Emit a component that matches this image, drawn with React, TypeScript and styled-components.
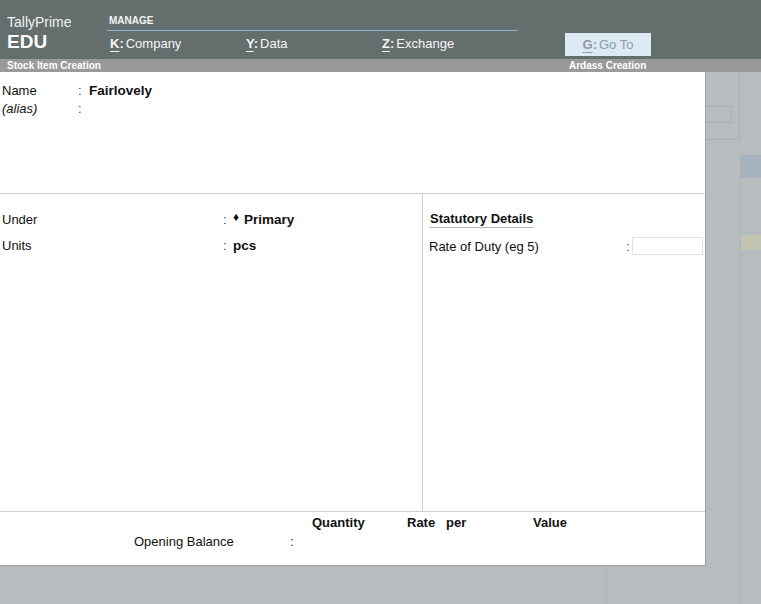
import React from "react";
import styled, { createGlobalStyle } from "styled-components";

const Global = createGlobalStyle`
  html, body { margin: 0; padding: 0; }
  body { font-family: "Liberation Sans", Arial, sans-serif; background: #b7bcbf; overflow: hidden; }
  * { box-sizing: border-box; }
`;

const Root = styled.div`
  width: 761px;
  height: 604px;
  display: flex;
  flex-direction: column;
  background: #b7bcbf;
  font-family: "Liberation Sans", Arial, sans-serif;
  color: #111;
`;

const Header = styled.header`
  height: 59px;
  background: #646e6d;
  display: flex;
  color: #fff;
`;

const Brand = styled.div`
  width: 107px;
  padding: 14px 0 0 7px;
  display: flex;
  flex-direction: column;
`;

const BrandName = styled.div`
  font-size: 14px;
  line-height: 16px;
  color: #f2f2f2;
`;

const BrandEdition = styled.div`
  font-size: 19px;
  line-height: 22px;
  font-weight: bold;
  margin-top: 1px;
`;

const Menu = styled.nav`
  width: 411px;
  padding-top: 15px;
  display: flex;
  flex-direction: column;
`;

const MenuLabel = styled.div`
  font-size: 10px;
  line-height: 12px;
  font-weight: bold;
  padding-left: 2px;
  color: #f4f4f4;
`;

const MenuRule = styled.div`
  height: 1px;
  background: #8eb3cf;
  margin-top: 3px;
`;

const MenuItems = styled.div`
  display: flex;
  margin-top: 4px;
  padding-left: 3px;
`;

const MenuItem = styled.div`
  width: 137px;
  font-size: 13px;
  line-height: 18px;
  color: #f6f6f6;
  white-space: nowrap;
`;

const Key = styled.span`
  font-weight: bold;
  margin-right: 2px;
  & > u {
    text-decoration: underline;
    text-underline-offset: 3px;
  }
`;

const GoTo = styled.button`
  margin: 33px 0 0 47px;
  width: 86px;
  height: 23px;
  border: none;
  background: #dde9f3;
  color: #8e9ba6;
  font-family: "Liberation Sans", Arial, sans-serif;
  font-size: 13px;
  padding: 0;
  display: flex;
  align-items: center;
  justify-content: center;
  white-space: nowrap;
`;

const TitleBar = styled.div`
  height: 13px;
  background: #999a9a;
  display: flex;
  align-items: center;
  font-size: 10px;
  font-weight: bold;
  color: #fff;
`;

const TitleLeft = styled.div`
  padding-left: 7px;
  width: 569px;
`;

const Body = styled.div`
  flex: 1;
  display: flex;
`;

const LeftColumn = styled.div`
  width: 706px;
  display: flex;
  flex-direction: column;
`;

const FormPanel = styled.main`
  height: 494px;
  background: #fff;
  border-right: 1px solid #9ea2a4;
  border-bottom: 1px solid #9ea2a4;
  display: flex;
  flex-direction: column;
  font-size: 13px;
`;

const TopSection = styled.section`
  height: 122px;
  border-bottom: 1px solid #cfcfcf;
  padding-top: 9px;
`;

const FieldRow = styled.div<{ $labelWidth: number; $colonWidth: number }>`
  display: flex;
  align-items: center;
  height: 18px;
  padding-left: 2px;
  & > .label { width: ${(p) => p.$labelWidth}px; white-space: nowrap; }
  & > .colon { width: ${(p) => p.$colonWidth}px; color: #444; }
`;

const Label = styled.span<{ $italic?: boolean }>`
  font-style: ${(p) => (p.$italic ? "italic" : "normal")};
`;

const Value = styled.span`
  font-weight: bold;
  font-size: 13.5px;
  white-space: nowrap;
  display: inline-flex;
  align-items: center;
`;

const Diamond = styled.span`
  font-size: 12px;
  width: 11px;
  position: relative;
  top: -2px;
`;

const MiddleSection = styled.section`
  height: 318px;
  border-bottom: 1px solid #cfcfcf;
  display: flex;
`;

const MainColumn = styled.div`
  width: 423px;
  border-right: 1px solid #cfcfcf;
  padding-top: 16px;
  display: flex;
  flex-direction: column;
  gap: 8px;
`;

const SideColumn = styled.div`
  flex: 1;
  padding: 17px 0 0 6px;
  display: flex;
  flex-direction: column;
`;

const SectionTitle = styled.div`
  font-weight: bold;
  align-self: flex-start;
  line-height: 16px;
  padding: 0 1px 0 1px;
  border-bottom: 1px solid #b8b8b8;
`;

const DutyRow = styled.div`
  display: flex;
  align-items: center;
  margin-top: 9px;
  height: 18px;
`;

const DutyLabel = styled.span`
  width: 197px;
  white-space: nowrap;
`;

const DutyColon = styled.span`
  width: 6px;
  color: #444;
`;

const DutyInput = styled.div`
  width: 71px;
  height: 18px;
  border: 1px solid #e2e2e2;
`;

const BottomSection = styled.section`
  flex: 1;
  padding-top: 2px;
`;

const ColumnHeads = styled.div`
  display: flex;
  padding-left: 312px;
  font-weight: bold;
  line-height: 17px;
`;

const Head = styled.span<{ $w?: number }>`
  width: ${(p) => (p.$w ? `${p.$w}px` : "auto")};
`;

const BalanceRow = styled.div`
  display: flex;
  padding-left: 134px;
  line-height: 17px;
  margin-top: 2px;
`;

const BalanceLabel = styled.span`
  width: 156px;
`;

const BelowStrip = styled.div`
  flex: 1;
  display: flex;
`;

const FaintCol = styled.div`
  width: 607px;
  border-right: 1px solid #afb5b8;
`;

const Backdrop = styled.div`
  flex: 1;
  display: flex;
`;

const BackdropA = styled.div`
  width: 34px;
  display: flex;
  flex-direction: column;
`;

const GhostBox = styled.div`
  height: 68px;
  border-right: 1px solid #a9b0b3;
  border-bottom: 1px solid #a9b0b3;
  padding-top: 34px;
`;

const GhostField = styled.div`
  width: 26px;
  height: 17px;
  border: 1px solid #a9b0b3;
  border-left: none;
`;

const BackdropB = styled.div`
  flex: 1;
  margin-top: 83px;
  border-left: 1px solid #aeb4b8;
  display: flex;
  flex-direction: column;
`;

const Tint = styled.div<{ $color: string; $h: number; $mt: number }>`
  height: ${(p) => p.$h}px;
  margin-top: ${(p) => p.$mt}px;
  background: ${(p) => p.$color};
`;

export default function App() {
  return (
    <Root>
      <Global />
      <Header>
        <Brand>
          <BrandName>TallyPrime</BrandName>
          <BrandEdition>EDU</BrandEdition>
        </Brand>
        <Menu>
          <MenuLabel>MANAGE</MenuLabel>
          <MenuRule />
          <MenuItems>
            <MenuItem>
              <Key><u>K</u>:</Key>Company
            </MenuItem>
            <MenuItem>
              <Key><u>Y</u>:</Key>Data
            </MenuItem>
            <MenuItem>
              <Key><u>Z</u>:</Key>Exchange
            </MenuItem>
          </MenuItems>
        </Menu>
        <GoTo>
          <Key><u>G</u>:</Key>Go To
        </GoTo>
      </Header>
      <TitleBar>
        <TitleLeft>Stock Item Creation</TitleLeft>
        <span>Ardass Creation</span>
      </TitleBar>
      <Body>
        <LeftColumn>
          <FormPanel>
            <TopSection>
              <FieldRow $labelWidth={76} $colonWidth={11}>
                <Label className="label">Name</Label>
                <span className="colon">:</span>
                <Value>Fairlovely</Value>
              </FieldRow>
              <FieldRow $labelWidth={76} $colonWidth={11}>
                <Label className="label" $italic>(alias)</Label>
                <span className="colon">:</span>
              </FieldRow>
            </TopSection>
            <MiddleSection>
              <MainColumn>
                <FieldRow $labelWidth={221} $colonWidth={10}>
                  <Label className="label">Under</Label>
                  <span className="colon">:</span>
                  <Value>
                    <Diamond>♦</Diamond>Primary
                  </Value>
                </FieldRow>
                <FieldRow $labelWidth={221} $colonWidth={10}>
                  <Label className="label">Units</Label>
                  <span className="colon">:</span>
                  <Value>pcs</Value>
                </FieldRow>
              </MainColumn>
              <SideColumn>
                <SectionTitle>Statutory Details</SectionTitle>
                <DutyRow>
                  <DutyLabel>Rate of Duty (eg 5)</DutyLabel>
                  <DutyColon>:</DutyColon>
                  <DutyInput />
                </DutyRow>
              </SideColumn>
            </MiddleSection>
            <BottomSection>
              <ColumnHeads>
                <Head $w={95}>Quantity</Head>
                <Head $w={39}>Rate</Head>
                <Head $w={87}>per</Head>
                <Head>Value</Head>
              </ColumnHeads>
              <BalanceRow>
                <BalanceLabel>Opening Balance</BalanceLabel>
                <span>:</span>
              </BalanceRow>
            </BottomSection>
          </FormPanel>
          <BelowStrip>
            <FaintCol />
          </BelowStrip>
        </LeftColumn>
        <Backdrop>
          <BackdropA>
            <GhostBox>
              <GhostField />
            </GhostBox>
          </BackdropA>
          <BackdropB>
            <Tint $color="#a6b2bd" $h={23} $mt={0} />
            <Tint $color="#c4c4b2" $h={15} $mt={57} />
          </BackdropB>
        </Backdrop>
      </Body>
    </Root>
  );
}
